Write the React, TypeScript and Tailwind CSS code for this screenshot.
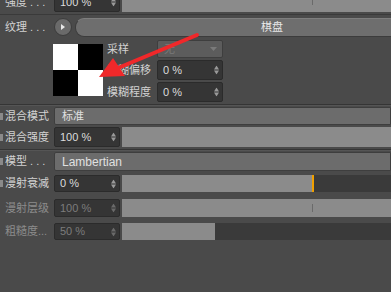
import React from "react";

const font = { fontFamily: '"Liberation Sans", "Noto Sans CJK SC", sans-serif' };

const Marker = () => <span className="absolute left-0 w-[3px] h-[7px] bg-[#8a8a8a]" />;

const Label = ({ text, dim, marker }: { text: string; dim?: boolean; marker?: boolean }) => (
  <div
    className={`relative w-[54px] shrink-0 pl-[5px] flex items-center text-[11px] whitespace-nowrap ${
      dim ? "text-[#8c8c8c]" : "text-[#d2d2d2]"
    }`}
  >
    {marker && <Marker />}
    {text}
  </div>
);

const Spinner = ({ dim }: { dim?: boolean }) => (
  <svg width="5" height="9" viewBox="0 0 5 9" className="absolute right-[3px] top-1/2 -translate-y-1/2">
    <path d="M0 4 L2.5 0 L5 4 Z M0 5 L2.5 9 L5 5 Z" fill={dim ? "#6a6a6a" : "#9a9a9a"} />
  </svg>
);

const NumField = ({ value, dim }: { value: string; dim?: boolean }) => (
  <div
    className={`relative w-[66px] h-full shrink-0 bg-[#353535] border border-[#2b2b2b] rounded-[2px] flex items-center pl-[5px] text-[11px] ${
      dim ? "text-[#7c7c7c]" : "text-[#dcdcdc]"
    }`}
  >
    {value}
    <Spinner dim={dim} />
  </div>
);

const Slider = ({ fill, tick, orange }: { fill?: number; tick?: boolean; orange?: boolean }) => (
  <div className="relative flex-1 h-full ml-[2px] bg-[#3a3a3a] flex">
    <div className="h-full bg-[#8b8b8b]" style={{ width: fill === undefined ? "100%" : `${fill}px` }} />
    {tick && <span className="absolute left-[190px] top-[5px] w-px h-[8px] bg-[#6a6a6a]" />}
    {orange && <span className="absolute left-[190px] top-0 w-[2px] h-full bg-[#f0a000]" />}
  </div>
);

const Separator = () => (
  <div className="h-[2px] border-t border-[#353535] border-b border-b-[#555] my-[1px]" />
);

export default function App() {
  return (
    <div className="relative w-[391px] h-[292px] overflow-hidden bg-[#4a4a4a] select-none" style={font}>
      {/* top row, cut by the frame */}
      <div className="flex h-[20px] -mt-[8px]">
        <Label text="强度 . . ." />
        <NumField value="100 %" />
        <Slider tick />
      </div>
      <div className="h-[3px] border-b border-[#3a3a3a]" />

      {/* texture row */}
      <div className="flex h-[20px] mt-[2px] items-center">
        <Label text="纹理 . . ." />
        <div className="w-[18px] h-[18px] rounded-full bg-[#6a6a6a] border border-[#3c3c3c] flex items-center justify-center shrink-0">
          <svg width="4" height="6" viewBox="0 0 4 6">
            <path d="M0 0 L4 3 L0 6 Z" fill="#e8e8e8" />
          </svg>
        </div>
        <div className="ml-[3px] w-[394px] shrink-0 h-[19px] rounded-[9px] bg-[#6e6e6e] border border-[#3c3c3c] border-t-[#7e7e7e] flex items-center justify-center text-[11px] text-[#e6e6e6]">
          棋盘
        </div>
      </div>

      {/* texture preview and options */}
      <div className="flex mt-[3px] h-[63px]">
        <div className="w-[53px] shrink-0" />
        <div className="w-[50px] h-[52px] mt-[4px] grid grid-cols-2 grid-rows-2 shrink-0">
          <div className="bg-white" />
          <div className="bg-black" />
          <div className="bg-black" />
          <div className="bg-white" />
        </div>
        <div className="flex flex-col ml-[4px] gap-[2px]">
          <div className="flex h-[18px] items-center">
            <span className="w-[50px] text-[11px] text-[#d2d2d2]">采样</span>
            <div className="w-[66px] h-full bg-[#5c5c5c] border border-[#3e3e3e] rounded-[2px] flex items-center justify-between pl-[6px] pr-[5px] text-[11px] text-[#7a7a7a]">
              无
              <svg width="7" height="4" viewBox="0 0 7 4">
                <path d="M0 0 L7 0 L3.5 4 Z" fill="#7a7a7a" />
              </svg>
            </div>
          </div>
          <div className="flex h-[20px] items-center">
            <span className="w-[50px] text-[11px] text-[#d2d2d2]">模糊偏移</span>
            <NumField value="0 %" />
          </div>
          <div className="flex h-[20px] items-center">
            <span className="w-[50px] text-[11px] text-[#d2d2d2]">模糊程度</span>
            <NumField value="0 %" />
          </div>
        </div>
      </div>

      <Separator />

      <div className="flex h-[18px] mt-[1px]">
        <Label text="混合模式" marker />
        <div className="flex-1 h-full bg-[#6c6c6c] border border-[#3e3e3e] rounded-l-[2px] flex items-center pl-[7px] text-[11px] text-[#e0e0e0]">
          标准
        </div>
      </div>
      <div className="flex h-[20px] mt-[2px]">
        <Label text="混合强度" marker />
        <NumField value="100 %" />
        <Slider />
      </div>

      <div className="mt-[2px]">
        <Separator />
      </div>

      <div className="flex h-[19px] mt-[1px]">
        <Label text="模型 . . ." marker />
        <div className="flex-1 h-full bg-[#6c6c6c] border border-[#3e3e3e] rounded-l-[2px] flex items-center pl-[7px] text-[12px] text-[#e0e0e0]">
          Lambertian
        </div>
      </div>
      <div className="flex h-[17px] mt-[4px]">
        <Label text="漫射衰减" marker />
        <NumField value="0 %" />
        <Slider fill={190} orange />
      </div>
      <div className="flex h-[18px] mt-[7px]">
        <Label text="漫射层级" dim />
        <NumField value="100 %" dim />
        <Slider tick />
      </div>
      <div className="flex h-[17px] mt-[6px]">
        <Label text="粗糙度..." dim />
        <NumField value="50 %" dim />
        <Slider fill={93} />
      </div>

      {/* red annotation arrow */}
      <svg className="absolute left-0 top-0 pointer-events-none" width="391" height="292" viewBox="0 0 391 292">
        <path d="M197 35 L118 68" stroke="#f0282a" strokeWidth="4" strokeLinecap="round" />
        <path d="M99 77 L113 58 L125 76 Z" fill="#f0282a" />
      </svg>
    </div>
  );
}
